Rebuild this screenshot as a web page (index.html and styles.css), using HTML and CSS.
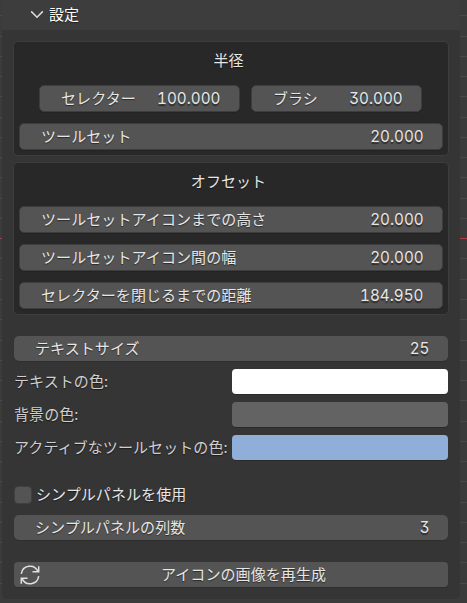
FILE: index.html
```
<!DOCTYPE html>
<html lang="ja">
<head>
<meta charset="utf-8">
<title>設定</title>
<link rel="stylesheet" href="styles.css">
</head>
<body>
<main class="panel">
  <header class="panel-header">
    <svg class="chevron" viewBox="0 0 14 9"><path d="M1.2 1.4 7 7.2l5.8-5.8"/></svg>
    <h1>設定</h1>
  </header>
  <div class="panel-body">
    <section class="box">
      <h2>半径</h2>
      <div class="pair">
        <div class="field selector"><span>セレクター</span><b>100.000</b></div>
        <div class="field brush"><span>ブラシ</span><b>30.000</b></div>
      </div>
      <div class="field"><span>ツールセット</span><b>20.000</b></div>
    </section>
    <section class="box">
      <h2>オフセット</h2>
      <div class="field"><span>ツールセットアイコンまでの高さ</span><b>20.000</b></div>
      <div class="field"><span>ツールセットアイコン間の幅</span><b>20.000</b></div>
      <div class="field"><span>セレクターを閉じるまでの距離</span><b>184.950</b></div>
    </section>
    <section class="group text-group">
      <div class="field wide"><span>テキストサイズ</span><b>25</b></div>
      <div class="color-row"><span>テキストの色:</span><i class="swatch white"></i></div>
      <div class="color-row"><span>背景の色:</span><i class="swatch gray"></i></div>
      <div class="color-row"><span>アクティブなツールセットの色:</span><i class="swatch blue"></i></div>
    </section>
    <section class="group simple-group">
      <div class="check-row"><i class="checkbox"></i><span>シンプルパネルを使用</span></div>
      <div class="field wide"><span>シンプルパネルの列数</span><b>3</b></div>
    </section>
    <div class="button">
      <svg class="refresh" viewBox="0 0 20 20"><path d="M1.3 8.8A8.7 8.7 0 0 1 17.9 6.4M18.7 1.2v5.6h-6.2M18.7 11.2A8.7 8.7 0 0 1 2.1 13.6M1.3 18.8v-5.6h6.2"/></svg>
      <span>アイコンの画像を再生成</span>
    </div>
  </div>
</main>
</body>
</html>
```
FILE: styles.css
```
* { box-sizing: border-box; }
body {
  margin: 0;
  height: 603px;
  overflow: hidden;
  padding: 0 7px 0 2px;
  background:
    linear-gradient(#b03a48, #b03a48) 0 238px / 100% 1px no-repeat,
    repeating-linear-gradient(#494949 0, #494949 1px, transparent 1px, transparent 20.26px) 0 -4.9px / 100% 620px no-repeat,
    #3b3b3b;
  color: #e6e6e6;
  font: 15px/25px Inter, "Noto Sans CJK JP", sans-serif;
  letter-spacing: .08px;
  font-feature-settings: "tnum", "cv09";
  text-shadow: 0 1px 1px rgba(0, 0, 0, .5);
}
.panel {
  height: 599px;
  background: #353535;
  border-radius: 0 0 5px 5px;
  overflow: hidden;
}
.panel-header {
  display: flex;
  align-items: center;
  height: 30px;
  padding: 0 0 2px 28px;
  background: #3d3d3d;
}
.chevron {
  width: 14px;
  height: 9px;
  margin-right: 5px;
  fill: none;
  stroke: #dcdcdc;
  stroke-width: 1.5;
}
h1, h2 { margin: 0; font-size: 15px; font-weight: 400; }
h1 { color: #fff; }
h2 { height: 25px; line-height: 25px; text-align: center; padding-right: 5px; }
.panel-body {
  display: flex;
  flex-direction: column;
  padding: 11px 12px 0 11px;
}
.box {
  display: flex;
  flex-direction: column;
  gap: 12px;
  height: 115px;
  margin-right: -1px;
  padding: 6px 5px;
  background: #282828;
  border: 1px solid #3d3d3d;
  border-radius: 5px;
}
.box + .box { height: 153px; margin-top: 6px; }
.pair { display: flex; gap: 11px; padding-left: 20px; }
.field {
  display: flex;
  justify-content: space-between;
  height: 27px;
  margin-bottom: -1px;
  padding: 0 18.5px 0 21px;
  background: #545454;
  border: 1px solid #3d3d3d;
  border-radius: 5px;
  box-shadow: 0 1px 0 rgba(0, 0, 0, .12);
  white-space: nowrap;
}
.field b {
  font-weight: 400;
  letter-spacing: 0;
  transform: scale(1.015, 1.09);
  transform-origin: 100% 52%;
}
.selector { width: 201px; padding-right: 18.5px; }
.brush { width: 171px; padding-right: 18.5px; }
.group, .button { margin-left: 1px; }
.text-group { display: flex; flex-direction: column; gap: 8px; margin-top: 21px; }
.wide {
  height: 25px;
  margin: 0;
  border: 0;
}
.color-row { display: flex; justify-content: space-between; height: 25px; color: #cfcfcf; white-space: nowrap; }
.swatch { width: 216px; height: 25px; border-radius: 4px; box-shadow: 0 1px 0 rgba(0, 0, 0, .2); }
.white { background: #fff; }
.gray { background: #636363; }
.blue { background: #8fafd9; }
.simple-group { display: flex; flex-direction: column; gap: 8px; margin-top: 22px; }
.check-row { display: flex; align-items: center; height: 25px; gap: 4px; }
.checkbox { width: 18px; height: 18px; border: 1px solid #404040; border-radius: 4px; background: #545454; }
.button {
  display: flex;
  align-items: center;
  height: 25px;
  margin-top: 22px;
  padding-left: 6px;
  background: #545454;
  border-radius: 4px;
  box-shadow: 0 1px 0 rgba(0, 0, 0, .12);
}
.button span { flex: 1; text-align: center; padding-right: 1px; }
.refresh { width: 20px; height: 20px; fill: none; stroke: #e0e0e0; stroke-width: 1.5; }
```
